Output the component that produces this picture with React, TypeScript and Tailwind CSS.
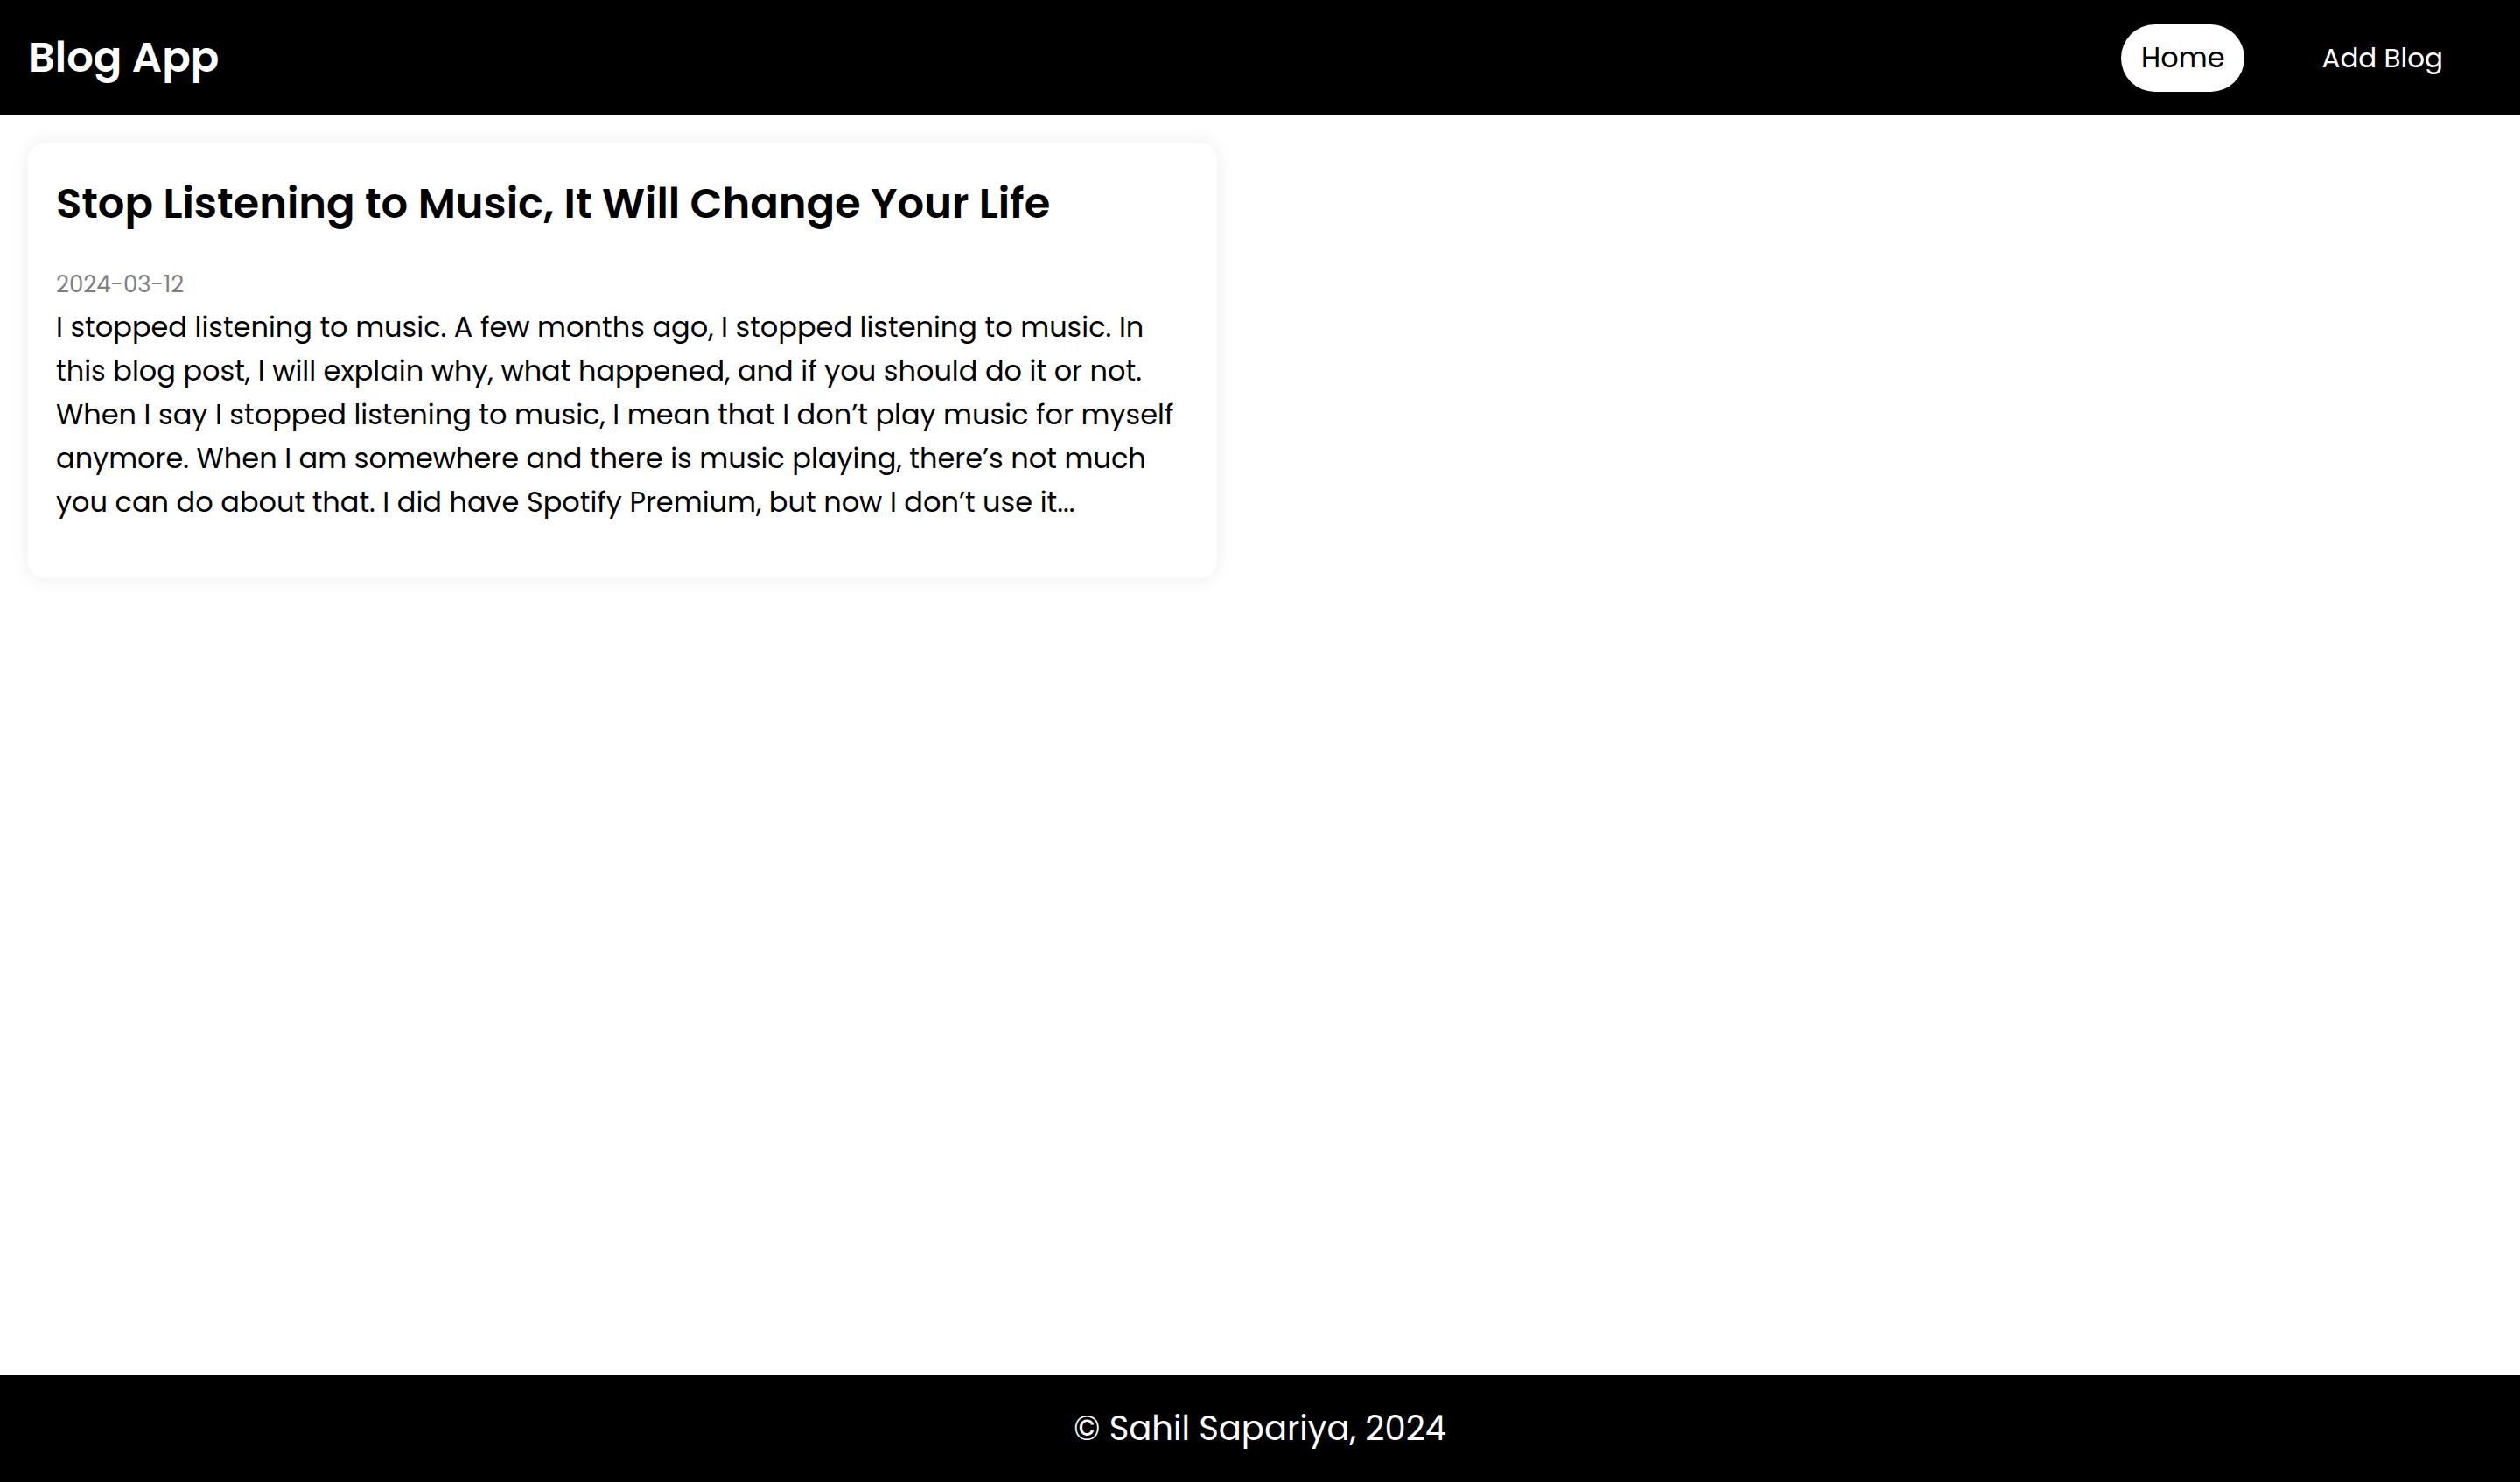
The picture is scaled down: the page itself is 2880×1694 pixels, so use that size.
import React, { FC } from 'react'

const bodyLines = [
    'I stopped listening to music. A few months ago, I stopped listening to music. In',
    'this blog post, I will explain why, what happened, and if you should do it or not.',
    'When I say I stopped listening to music, I mean that I don’t play music for myself',
    'anymore. When I am somewhere and there is music playing, there’s not much',
    'you can do about that. I did have Spotify Premium, but now I don’t use it...',
]

const Navbar: FC = () => {
    return (
        <header className='flex items-center justify-between h-[132px] bg-black pl-[32px] pr-[64px]'>
            <h1 className='text-white text-[48px] font-semibold'>Blog App</h1>
            <nav className='flex items-center gap-[64px]'>
                <a className='flex items-center h-[77px] px-[23px] rounded-full bg-white text-black text-[32px]'>
                    Home
                </a>
                <a className='flex items-center h-[77px] px-[24px] text-white text-[31px]'>
                    Add Blog
                </a>
            </nav>
        </header>
    )
}

const BlogCard: FC = () => {
    return (
        <article className='w-[1359px] rounded-[20px] bg-white px-[32px] pt-[34px] pb-[62px] 
            shadow-[0_0_22px_rgba(0,0,0,0.08)]'>
            <h2 className='text-[48px] leading-[72px] font-semibold text-black'>
                Stop Listening to Music, It Will Change Your Life
            </h2>
            <p className='mt-[39px] text-[26px] leading-[35px] text-[#808080]'>2024-03-12</p>
            <p className='mt-[6px] text-[32px] leading-[50px] text-black'>
                {bodyLines.map((line, i) => (
                    <React.Fragment key={i}>
                        {line}
                        {i < bodyLines.length - 1 && <br />}
                    </React.Fragment>
                ))}
            </p>
        </article>
    )
}

const Footer: FC = () => {
    return (
        <footer className='flex items-center justify-center h-[122px] bg-black text-white text-[38.5px]'>
            © Sahil Sapariya, 2024
        </footer>
    )
}

const App: FC = () => {
    return (
        <div className="flex flex-col min-h-screen bg-white font-['Poppins','Inter',sans-serif]">
            <Navbar />
            <main className='flex-1 px-[32px] pt-[31px]'>
                <BlogCard />
            </main>
            <Footer />
        </div>
    )
}

export default App
